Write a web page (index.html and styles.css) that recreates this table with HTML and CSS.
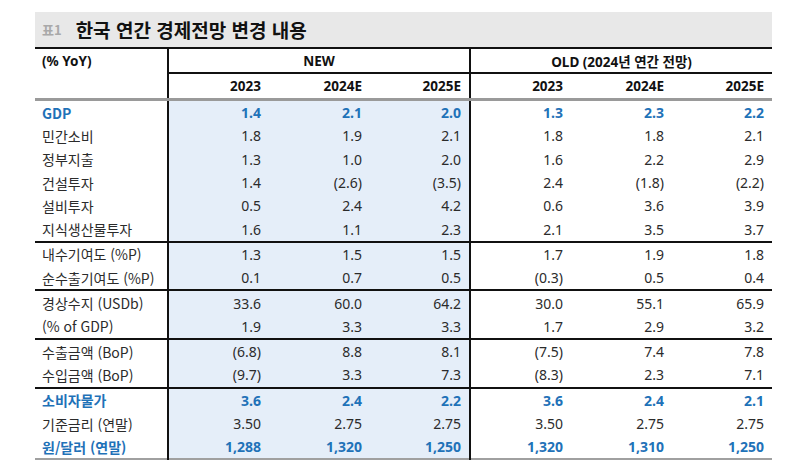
FILE: index.html
```html
<!DOCTYPE html>
<html lang="ko">
<head>
<meta charset="utf-8">
<link rel="stylesheet" href="styles.css">
</head>
<body>
<div class="wrap">
  <div class="title"><span class="tag">표1</span><span class="main">한국 연간 경제전망 변경 내용</span></div>
  <table class="tbl">
    <colgroup>
      <col class="c-label"><col class="c-num"><col class="c-num"><col class="c-num2"><col class="c-num"><col class="c-num"><col class="c-num2">
    </colgroup>
    <thead>
      <tr class="h1">
        <th class="lab" rowspan="2">(% YoY)</th>
        <th class="grp vl" colspan="3">NEW</th>
        <th class="grp vl" colspan="3">OLD (2024년 연간 전망)</th>
      </tr>
      <tr class="h2">
        <th class="vl">2023</th><th>2024E</th><th>2025E</th>
        <th class="vl">2023</th><th>2024E</th><th>2025E</th>
      </tr>
    </thead>
    <tbody>
      <tr class="hl"><td>GDP</td><td class="n">1.4</td><td class="n">2.1</td><td class="n">2.0</td><td class="vl">1.3</td><td>2.3</td><td>2.2</td></tr>
      <tr><td>민간소비</td><td class="n">1.8</td><td class="n">1.9</td><td class="n">2.1</td><td class="vl">1.8</td><td>1.8</td><td>2.1</td></tr>
      <tr><td>정부지출</td><td class="n">1.3</td><td class="n">1.0</td><td class="n">2.0</td><td class="vl">1.6</td><td>2.2</td><td>2.9</td></tr>
      <tr><td>건설투자</td><td class="n">1.4</td><td class="n">(2.6)</td><td class="n">(3.5)</td><td class="vl">2.4</td><td>(1.8)</td><td>(2.2)</td></tr>
      <tr><td>설비투자</td><td class="n">0.5</td><td class="n">2.4</td><td class="n">4.2</td><td class="vl">0.6</td><td>3.6</td><td>3.9</td></tr>
      <tr class="end"><td>지식생산물투자</td><td class="n">1.6</td><td class="n">1.1</td><td class="n">2.3</td><td class="vl">2.1</td><td>3.5</td><td>3.7</td></tr>
      <tr><td>내수기여도 (%P)</td><td class="n">1.3</td><td class="n">1.5</td><td class="n">1.5</td><td class="vl">1.7</td><td>1.9</td><td>1.8</td></tr>
      <tr class="end"><td>순수출기여도 (%P)</td><td class="n">0.1</td><td class="n">0.7</td><td class="n">0.5</td><td class="vl">(0.3)</td><td>0.5</td><td>0.4</td></tr>
      <tr><td>경상수지 (USDb)</td><td class="n">33.6</td><td class="n">60.0</td><td class="n">64.2</td><td class="vl">30.0</td><td>55.1</td><td>65.9</td></tr>
      <tr class="end"><td>(% of GDP)</td><td class="n">1.9</td><td class="n">3.3</td><td class="n">3.3</td><td class="vl">1.7</td><td>2.9</td><td>3.2</td></tr>
      <tr><td>수출금액 (BoP)</td><td class="n">(6.8)</td><td class="n">8.8</td><td class="n">8.1</td><td class="vl">(7.5)</td><td>7.4</td><td>7.8</td></tr>
      <tr class="end"><td>수입금액 (BoP)</td><td class="n">(9.7)</td><td class="n">3.3</td><td class="n">7.3</td><td class="vl">(8.3)</td><td>2.3</td><td>7.1</td></tr>
      <tr class="hl"><td>소비자물가</td><td class="n">3.6</td><td class="n">2.4</td><td class="n">2.2</td><td class="vl">3.6</td><td>2.4</td><td>2.1</td></tr>
      <tr><td>기준금리 (연말)</td><td class="n">3.50</td><td class="n">2.75</td><td class="n">2.75</td><td class="vl">3.50</td><td>2.75</td><td>2.75</td></tr>
      <tr class="hl last"><td>원/달러 (연말)</td><td class="n">1,288</td><td class="n">1,320</td><td class="n">1,250</td><td class="vl">1,320</td><td>1,310</td><td>1,250</td></tr>
    </tbody>
  </table>
</div>
</body>
</html>
```

FILE: styles.css
```css
html, body {
  margin: 0;
  padding: 0;
  background: #ffffff;
}
body {
  font-family: "Noto Sans", "Noto Sans CJK KR", sans-serif;
  color: #2b2b2b;
  font-size: 14px;
}
.wrap {
  margin: 12px 0 0 35px;
  width: 737px;
}
.title {
  height: 35px;
  background: #e8e8e8;
  display: flex;
  align-items: center;
  padding-left: 7px;
  box-sizing: border-box;
}
.tag {
  font-family: "Noto Sans CJK KR", sans-serif;
  font-weight: 700;
  font-size: 13px;
  color: #a9a9a9;
  margin-right: 14px;
}
.main {
  font-family: "Noto Sans CJK KR", sans-serif;
  font-weight: 700;
  font-size: 19px;
  color: #111;
}
.tbl {
  width: 737px;
  border-collapse: collapse;
  table-layout: fixed;
  border-top: 2px solid #111;
  border-bottom: 2px solid #a0a0a0;
}
.c-label { width: 133px; }
.c-num { width: 101px; }
.c-num2 { width: 100px; }
th {
  font-weight: 700;
  color: #111;
  padding: 0 8px 0 0;
  text-align: right;
  font-size: 13.5px;
}
.h1 th { height: 23px; }
.h2 th { height: 24px; border-bottom: 3px solid #9a9a9a; }
th.lab {
  text-align: left;
  vertical-align: top;
  padding: 3px 0 0 7px;
  border-bottom: 3px solid #9a9a9a;
}
th.grp {
  text-align: center;
  padding: 0;
  border-bottom: 2px solid #111;
}
.vl { border-left: 2px solid #111; }
td {
  height: 23.3px;
  padding: 0 8px 0 0;
  text-align: right;
  white-space: nowrap;
}
td:first-child {
  text-align: left;
  padding: 0 0 0 7px;
  font-family: "Noto Sans CJK KR", sans-serif;
}
td.n { background: #e5eef9; }
td.n:nth-child(2) { border-left: 2px solid #111; }
tr.end td { border-bottom: 2px solid #111; }
tr.hl td {
  color: #1f72b8;
  font-weight: 700;
}
```
